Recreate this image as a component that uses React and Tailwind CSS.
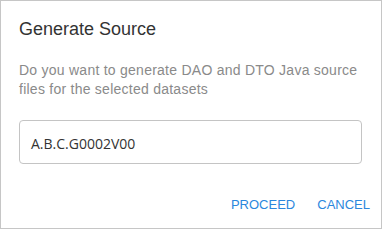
export default function App() {
  return (
    <div className="w-[382px] h-[229px] border border-[#c6c6c6] bg-white box-border" style={{ fontFamily: '"Liberation Sans", Arial, sans-serif' }}>
      <div className="pl-[18px] pt-[16px]">
        <div className="text-[18px] leading-[24px] text-[#333333]">Generate Source</div>
        <p className="mt-[20px] w-[343px] text-[14px] leading-[19px] tracking-[0.25px] text-[#8a8a8a]">
          Do you want to generate DAO and DTO Java source files for the selected datasets
        </p>
        <div className="mt-[21px] w-[343px] h-[44px] border border-[#c4c4c4] rounded-[4px] flex items-center pl-[11px] box-border">
          <span className="text-[14px] text-[#333333] pt-[2px]" style={{ fontFamily: '"Open Sans", sans-serif' }}>A.B.C.G0002V00</span>
        </div>
        <div className="mt-[33px] flex justify-end gap-[22px] pr-[11px] text-[13px] leading-[16px] text-[#2b87dd]">
          <span>PROCEED</span>
          <span>CANCEL</span>
        </div>
      </div>
    </div>
  );
}
